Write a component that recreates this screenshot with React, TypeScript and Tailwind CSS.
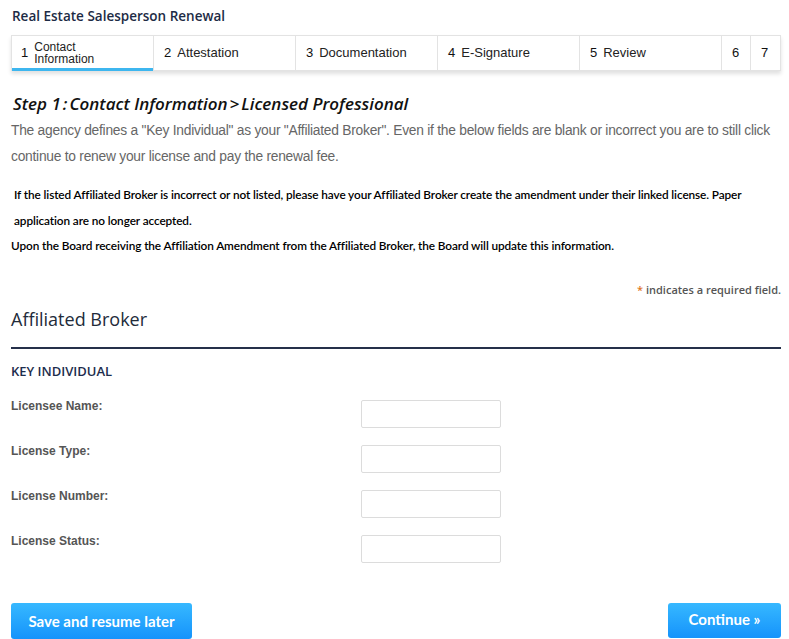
import React from 'react'

const steps = [
  { n: '1', label: 'Contact Information', w: 'w-[142px]', active: true },
  { n: '2', label: 'Attestation', w: 'w-[142px]' },
  { n: '3', label: 'Documentation', w: 'w-[142px]' },
  { n: '4', label: 'E-Signature', w: 'w-[142px]' },
  { n: '5', label: 'Review', w: 'w-[142px]' },
  { n: '6', label: '', w: 'w-[29px]' },
  { n: '7', label: '', w: 'flex-1' },
]

const fields = ['Licensee Name:', 'License Type:', 'License Number:', 'License Status:']

export default function App() {
  return (
    <div className="w-[789px] h-[639px] overflow-hidden bg-white pl-[11px] pr-[8px] font-['Liberation_Sans',Arial,sans-serif]">
      {/* Title */}
      <h1 className="pt-[7px] pl-[1px] text-[13.5px] leading-[18px] font-semibold text-[#1d2b45] font-['Open_Sans',sans-serif]">
        Real Estate Salesperson Renewal
      </h1>

      {/* Stepper */}
      <div className="mt-[10px] flex h-[36px] w-[770px] border border-[#e3e3e3] shadow-[0_3px_4px_rgba(0,0,0,0.12)]">
        {steps.map((s, i) => (
          <div
            key={s.n}
            className={`${s.w} relative flex items-center border-[#e3e3e3] text-[13px] text-[#111] ${i < steps.length - 1 ? 'border-r' : ''} ${s.active ? 'pl-[9px]' : 'pl-[10px]'}`}
          >
            <span className="mr-[6px]">{s.n}</span>
            {s.active ? (
              <span className="flex flex-col text-[12px] leading-[12px] text-[#222]">
                <span>Contact</span>
                <span>Information</span>
              </span>
            ) : (
              <span className="text-[#222]">{s.label}</span>
            )}
            {s.active && <div className="absolute -bottom-px left-0 right-0 h-[3px] bg-[#3db6ef]" />}
          </div>
        ))}
      </div>

      {/* Step heading */}
      <h2 className="mt-[22px] pl-[2px] text-[17px] leading-[22px] italic font-semibold text-[#111] font-['Open_Sans',sans-serif]">
        Step 1<span className="mx-[2px]">:</span>Contact Information<span className="mx-[2px]">&gt;</span>Licensed Professional
      </h2>
      <p className="mt-[3px] text-[13.8px] leading-[26px] tracking-[-0.25px] text-[#666]">
        The agency defines a "Key Individual" as your "Affiliated Broker". Even if the below fields are blank or incorrect you are to still click continue to renew your license and pay the renewal fee.
      </p>

      <div className="mt-[12px] text-[11.8px] leading-[25.5px] text-black font-['Lato',sans-serif] font-semibold tracking-[-0.1px]">
        <p className="pl-[3px]">
          If the listed Affiliated Broker is incorrect or not listed, please have your Affiliated Broker create the amendment under their linked license. Paper application are no longer accepted.
        </p>
        <p>Upon the Board receiving the Affiliation Amendment from the Affiliated Broker, the Board will update this information.</p>
      </div>

      <p className="mt-[23px] text-right text-[11px] font-semibold text-[#555] font-['Open_Sans',sans-serif]">
        <span className="text-[#e0781f]">*</span> indicates a required field.
      </p>

      <h3 className="mt-[9px] text-[18px] leading-[24px] font-medium text-[#222b3a] font-['Open_Sans',sans-serif]">Affiliated Broker</h3>
      <div className="mt-[16px] h-[2px] w-[770px] bg-[#25304a]" />
      <h4 className="mt-[13px] text-[13px] leading-[18px] font-semibold text-[#1d2d4d] font-['Open_Sans',sans-serif]">
        KEY INDIVIDUAL
      </h4>

      {/* Fields */}
      <div className="mt-[19px] flex flex-col gap-[16px]">
        {fields.map(f => (
          <div key={f} className="flex items-start">
            <label className="w-[350px] text-[12px] leading-[14px] font-bold text-[#555]">{f}</label>
            <input className="mt-[1px] h-[28px] w-[140px] rounded-[2px] border border-[#dcdcdc] bg-white outline-none" />
          </div>
        ))}
      </div>

      {/* Buttons */}
      <div className="mt-[40px] flex items-start justify-between">
        <button className="h-[36px] w-[181px] rounded-[3px] bg-gradient-to-b from-[#36b8ff] to-[#1593fb] text-[15px] font-bold text-white font-['Lato',sans-serif]">
          Save and resume later
        </button>
        <button className="h-[35px] w-[113px] rounded-[3px] bg-gradient-to-b from-[#36b8ff] to-[#1593fb] pb-[3px] text-[15px] font-bold text-white font-['Lato',sans-serif]">
          Continue »
        </button>
      </div>
    </div>
  )
}
